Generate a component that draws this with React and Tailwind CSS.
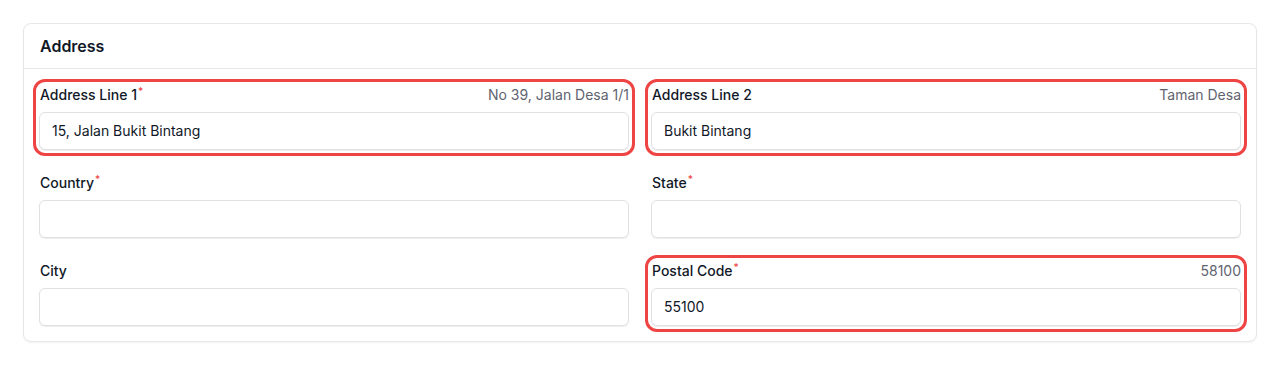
import React from "react";

const fields = [
  { label: "Address Line 1", required: true, hint: "No 39, Jalan Desa 1/1", value: "15, Jalan Bukit Bintang", highlight: true },
  { label: "Address Line 2", required: false, hint: "Taman Desa", value: "Bukit Bintang", highlight: true },
  { label: "Country", required: true, hint: "", value: "", highlight: false },
  { label: "State", required: true, hint: "", value: "", highlight: false },
  { label: "City", required: false, hint: "", value: "", highlight: false },
  { label: "Postal Code", required: true, hint: "58100", value: "55100", highlight: true },
];

function Field({ label, required, hint, value, highlight }) {
  return (
    <div
      className={
        "flex flex-col rounded-[6px] " +
        (highlight ? "outline-[3px] outline-offset-[3px] outline-[#ef4444]" : "")
      }
    >
      <div className="flex h-5 items-center justify-between pl-[1px] text-sm leading-5">
        <span className="font-medium text-[#111827]">
          {label}
          {required && (
            <span className="relative -top-[5px] ml-[1px] text-[10px] text-[#ef4444]">*</span>
          )}
        </span>
        {hint && <span className="text-[#5f6470]">{hint}</span>}
      </div>
      <div className="mt-[7px] flex h-[38px] items-center rounded-md border border-[#dfe1e5] bg-white px-3 text-sm text-[#111827] shadow-[0_1px_1px_rgba(0,0,0,0.07)]">
        {value}
      </div>
    </div>
  );
}

export default function App() {
  return (
    <div
      className="bg-white p-[23px]"
      style={{ fontFamily: "Inter, 'Noto Sans', sans-serif" }}
    >
      <div className="rounded-lg border border-[#e5e7eb] bg-white shadow-[0_1px_2px_rgba(0,0,0,0.05)]">
        <div className="border-b border-[#e5e7eb] px-4 py-3 text-base font-semibold leading-5 text-[#111827]">
          Address
        </div>
        <div className="grid grid-cols-2 gap-x-[22px] gap-y-[23px] px-[15px] pt-4 pb-[15px]">
          {fields.map((f) => (
            <Field key={f.label} {...f} />
          ))}
        </div>
      </div>
    </div>
  );
}
